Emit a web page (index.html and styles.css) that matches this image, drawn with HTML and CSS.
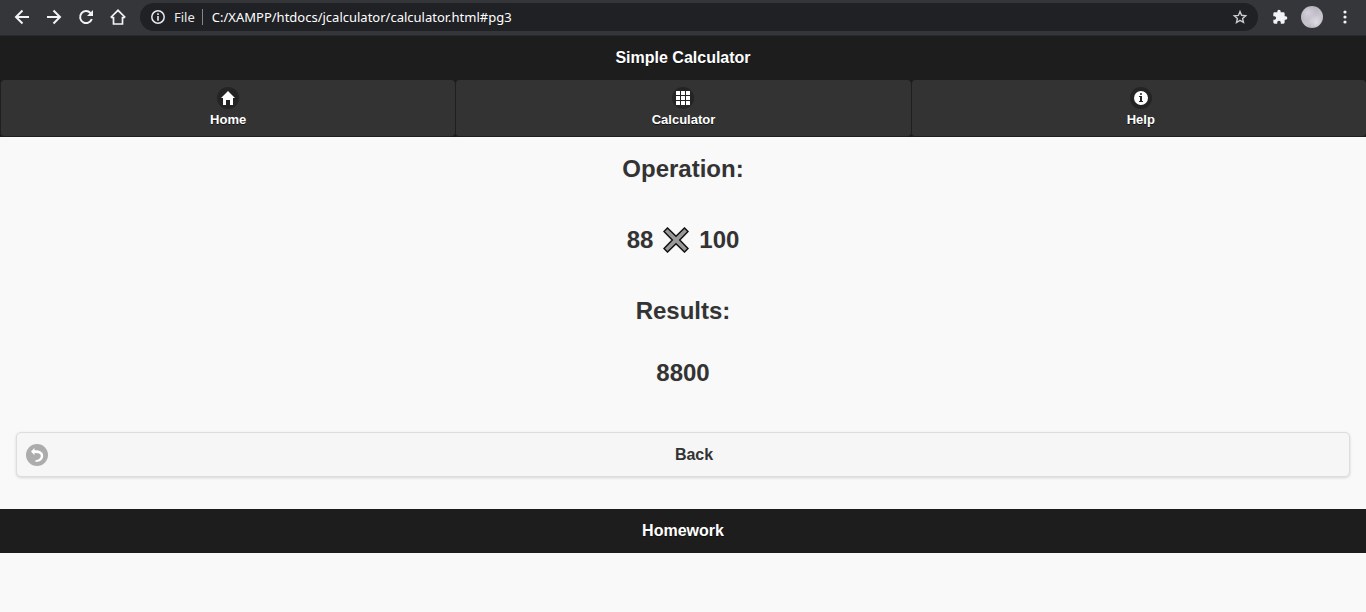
FILE: index.html
```html
<!DOCTYPE html>
<html lang="en">
<head>
<meta charset="utf-8">
<title>Simple Calculator</title>
<link rel="stylesheet" href="styles.css">
</head>
<body>
<div class="browser">
  <div class="browser-nav">
    <button class="tool" aria-label="Go back"><svg width="16" height="16" viewBox="0 0 16 16" fill="none" stroke="#f1f3f4" stroke-width="2"><path d="M15 8H2.500M8.500 1.500L2 8l6.500 6.500"/></svg></button>
    <button class="tool" aria-label="Go forward"><svg width="16" height="16" viewBox="0 0 16 16" fill="none" stroke="#f1f3f4" stroke-width="2"><path d="M1 8h12.500M7.500 1.500L14 8l-6.500 6.500"/></svg></button>
    <button class="tool" aria-label="Reload"><svg width="16" height="16" viewBox="0 0 16 16"><path d="M13.800 10A6 6 0 1 1 12.500 4" fill="none" stroke="#f1f3f4" stroke-width="2"/><path d="M15 1v6H9z" fill="#f1f3f4"/></svg></button>
    <button class="tool" aria-label="Browser home"><svg width="16" height="16" viewBox="0 0 16 16"><path d="M.7 8.500L8 1.300l7.300 7.200M1.500 8.600h2V15h9V8.600h2" fill="none" stroke="#f1f3f4" stroke-width="1.700"/></svg></button>
  </div>
  <div class="address">
    <svg width="14" height="14" viewBox="0 0 14 14" aria-hidden="true"><circle cx="7" cy="7" r="6.200" fill="none" stroke="#e8eaed" stroke-width="1.500"/><path d="M6.200 3.300h1.600v1.600H6.200zM6.200 6h1.600v4.700H6.200z" fill="#e8eaed"/></svg>
    <label class="scheme" for="url">File</label>
    <input class="url" id="url" type="text" value="C:/XAMPP/htdocs/jcalculator/calculator.html#pg3">
    <button class="tool" aria-label="Bookmark"><svg width="16" height="16" viewBox="0 0 16 16"><path d="M8 2.500l1.600 3.800 4.100.4-3.100 2.700.9 4L8 11.400l-3.500 2.100.9-4-3.100-2.700 4.100-.4z" fill="none" stroke="#c8cacd" stroke-width="1.400"/></svg></button>
  </div>
  <div class="browser-actions">
    <button class="tool" aria-label="Extensions"><svg width="16" height="16" viewBox="0 0 24 24"><path fill="#f1f3f4" d="M20.500 11H19V7a2 2 0 0 0-2-2h-4V3.500a2.500 2.500 0 0 0-5 0V5H4a2 2 0 0 0-2 2v3.800h1.500a2.700 2.700 0 0 1 0 5.400H2V20a2 2 0 0 0 2 2h3.800v-1.500a2.700 2.700 0 0 1 5.400 0V22H17a2 2 0 0 0 2-2v-4h1.500a2.500 2.500 0 0 0 0-5z"/></svg></button>
    <button class="tool" aria-label="Profile"><span class="avatar"></span></button>
    <button class="tool menu" aria-label="Menu"><svg width="4" height="16" viewBox="0 0 4 16" fill="#f1f3f4"><circle cx="2" cy="3" r="1.600"/><circle cx="2" cy="8" r="1.600"/><circle cx="2" cy="13" r="1.600"/></svg></button>
  </div>
</div>

<header class="bar"><h1 class="bar-title">Simple Calculator</h1></header>
<nav class="tabs">
  <a class="tab" href="#home"><span class="disc"><svg width="14" height="14" viewBox="0 0 14 14" fill="#fff"><path d="M7 0L0 7h2v7h3V9h4v5h3V7h2z"/></svg></span>Home</a>
  <a class="tab" href="#calculator"><span class="disc"><svg width="14" height="14" viewBox="0 0 14 14" fill="#fff"><rect width="4" height="4" rx=".3"/><rect x="5" width="4" height="4" rx=".3"/><rect x="10" width="4" height="4" rx=".3"/><rect y="5" width="4" height="4" rx=".3"/><rect x="5" y="5" width="4" height="4" rx=".3"/><rect x="10" y="5" width="4" height="4" rx=".3"/><rect y="10" width="4" height="4" rx=".3"/><rect x="5" y="10" width="4" height="4" rx=".3"/><rect x="10" y="10" width="4" height="4" rx=".3"/></svg></span>Calculator</a>
  <a class="tab" href="#help"><span class="disc"><svg width="14" height="14" viewBox="0 0 14 14"><path fill="#fff" fill-rule="evenodd" d="M7 0a7 7 0 1 0 0 14A7 7 0 0 0 7 0zM7 2a1 1 0 1 1 0 2 1 1 0 0 1 0-2zM9 11H5v-1h1V6H5V5h3v5h1z"/></svg></span>Help</a>
</nav>

<main class="content">
  <h2 class="line">Operation:</h2>
  <h2 class="line expression"><span>88</span><svg width="26" height="26" viewBox="0 0 26 26" role="img" aria-label="times"><path d="M4.500 1L13 9.300 21.500 1 25 4.500 16.700 13 25 21.500 21.500 25 13 16.700 4.500 25 1 21.500 9.300 13 1 4.500z" fill="#999" stroke="#111" stroke-width="1.500"/></svg><span>100</span></h2>
  <h2 class="line">Results:</h2>
  <h2 class="line result">8800</h2>
  <button class="back"><span class="back-icon"><svg width="14" height="14" viewBox="0 0 14 14"><path fill="#fff" d="M4.500 0L1 3.600l3.500 3.600V5C9 4.700 10.800 5.800 10.800 8c0 2.300-2 3.800-5.300 4.200V14c5-.2 7.700-2.500 7.700-6.200 0-3.900-3.200-5.700-8.700-5.600z"/></svg></span>Back</button>
</main>
<footer class="bar"><h2 class="bar-title">Homework</h2></footer>
</body>
</html>
```
FILE: styles.css
```css
* { box-sizing: border-box; }
body {
  margin: 0;
  background: #f9f9f9;
  color: #333;
  font-family: "Liberation Sans", Arial, sans-serif;
}
button { padding: 0; border: 0; background: none; font: inherit; color: inherit; }
svg { display: block; flex: none; }

.browser {
  display: flex;
  align-items: center;
  height: 36px;
  padding: 0 12px 2px 14px;
  background: #35363a;
  border-bottom: 1px solid #292a2d;
}
.browser-nav { display: flex; gap: 16px; }
.tool { display: flex; align-items: center; justify-content: center; }
.address {
  display: flex;
  flex: 1;
  align-items: center;
  height: 28px;
  margin: 0 14px;
  padding: 0 10px 0 11px;
  border-radius: 14px;
  background: #202124;
  color: #e8eaed;
  font: 13px/18px "Noto Sans", sans-serif;
}
.scheme { margin: 0 7px 0 9px; }
.url {
  flex: 1;
  min-width: 0;
  height: 16px;
  padding: 0 0 0 9px;
  border: 0;
  border-left: 1px solid #80868b;
  background: none;
  color: #fff;
  font: inherit;
  outline: 0;
}
.browser-actions { display: flex; align-items: center; gap: 13px; }
.avatar {
  width: 22px;
  height: 22px;
  border-radius: 50%;
  background:
    radial-gradient(circle at 70% 75%, #e0dde5 0, transparent 35%),
    radial-gradient(circle at 30% 30%, #d5d2dc 0, transparent 40%),
    linear-gradient(150deg, #aaa6b3, #c8c5cf 60%, #a5a1ad);
}
.menu { width: 18px; }

.bar {
  display: flex;
  justify-content: center;
  height: 44px;
  padding-top: 11px;
  background: #1d1d1d;
  color: #fff;
  text-shadow: 0 1px 0 #111;
}
.bar-title { margin: 0; font-size: 16px; line-height: 21px; }

.tabs {
  display: grid;
  grid-template-columns: repeat(3, 1fr);
  background: #1b1b1b;
}
.tab {
  display: flex;
  flex-direction: column;
  align-items: center;
  height: 57px;
  padding-top: 6px;
  border: 1px solid #1f1f1f;
  border-width: 0 0 1px 1px;
  border-radius: 4px;
  background: #333;
  color: #fff;
  font-size: 13px;
  font-weight: bold;
  line-height: 20px;
  text-decoration: none;
  text-shadow: 0 1px 0 #111;
}
.tab:last-child { padding-left: 4px; }
.disc {
  display: flex;
  align-items: center;
  justify-content: center;
  width: 22px;
  height: 22px;
  margin: 1px 0;
  border-radius: 50%;
  background: #242424;
}

.content {
  display: flex;
  flex-direction: column;
  padding: 16px 16px 32px;
  text-align: center;
  text-shadow: 0 1px 0 #f3f3f3;
}
.line { margin: 0 0 40px; font-size: 24px; line-height: 31px; }
.expression { display: flex; align-items: center; justify-content: center; gap: 10px; }
.line:nth-child(3) { margin-bottom: 31px; }
.result { margin-bottom: 44px; }
.back {
  display: grid;
  grid-template-columns: 22px 1fr;
  align-items: center;
  height: 45px;
  padding: 0 9px;
  border: 1px solid #ddd;
  border-radius: 5px;
  background: #f6f6f6;
  box-shadow: 0 1px 3px rgba(0, 0, 0, .15);
  font-size: 16px;
  font-weight: bold;
  line-height: 21px;
}
.back-icon {
  display: flex;
  align-items: center;
  justify-content: center;
  width: 22px;
  height: 22px;
  border-radius: 50%;
  background: #acacac;
}
```
